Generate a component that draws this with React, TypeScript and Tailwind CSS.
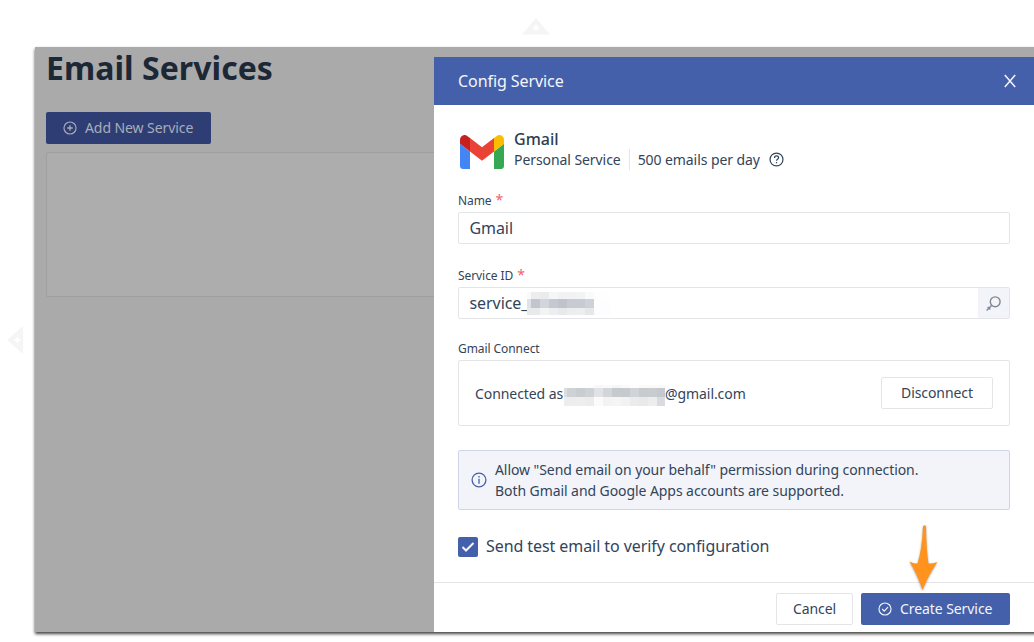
import React from 'react';

const serviceMosaic: string[][] = [
  ['#f9f9fa', '#eceded', '#eaebec', '#f5f6f7', '#f1f2f3', '#f2f2f5', '#f2f3f4', '#fafafa', '#fefefe'],
  ['#e1e2e6', '#c2c5ce', '#d2d6da', '#c4c8d0', '#bfc4cc', '#c8ccd2', '#c7ccd2', '#ced2d6', '#fdfdfd'],
  ['#e8e9ea', '#e8e9eb', '#f3f3f4', '#edeef0', '#e8e9ed', '#ecedef', '#edeeef', '#e6e7e9', '#fdfdfd'],
];

const emailMosaic: string[][] = [
  ['#ffffff', '#fefefe', '#fefefe', '#fefefe', '#f7f7f8', '#fafafa', '#f6f6f7', '#fafafa', '#fefefe', '#fafafa', '#fafafa', '#fafafa'],
  ['#dcdde1', '#cfd2d5', '#cacdd0', '#cfd2d5', '#e1e2e6', '#d3d6d9', '#c6cacd', '#c6cacd', '#d0d3d7', '#c7cbce', '#c8ccce', '#c5c9cd'],
  ['#ededee', '#ecedee', '#eeeeee', '#ececec', '#fbfbfb', '#f3f3f3', '#f5f5f5', '#f2f2f2', '#eaebeb', '#e8e9ea', '#ededee', '#dadbe0'],
];

function Mosaic({ rows, rowHeights, leadWidth, tailWidth }: { rows: string[][]; rowHeights: number[]; leadWidth: number; tailWidth: number }) {
  return (
    <div>
      {rows.map((row, r) => (
        <div key={r} className="flex" style={{ height: rowHeights[r] }}>
          {row.map((color, c) => (
            <div key={c} style={{ width: c === 0 ? leadWidth : c === row.length - 1 ? tailWidth : 9, background: color }} />
          ))}
        </div>
      ))}
    </div>
  );
}

function GmailLogo() {
  return (
    <svg className="h-[34px] w-[44px]" viewBox="52 42 88 66" preserveAspectRatio="none">
      <path fill="#4285f4" d="M58 108h14V74L52 59v43c0 3.32 2.69 6 6 6" />
      <path fill="#34a853" d="M120 108h14c3.32 0 6-2.69 6-6V59l-20 15" />
      <path fill="#fbbc04" d="M120 48v26l20-15v-8c0-7.42-8.47-11.65-14.4-7.2" />
      <path fill="#ea4335" d="M72 74V48l24 18 24-18v26L96 92" />
      <path fill="#c5221f" d="M52 51v8l20 15V48l-5.6-4.2c-5.94-4.45-14.4-.22-14.4 7.2" />
    </svg>
  );
}

function CircleIcon({ children, className }: { children: React.ReactNode; className: string }) {
  return (
    <svg className={className} viewBox="0 0 16 16" fill="none" stroke="currentColor" strokeWidth="1.3">
      <circle cx="8" cy="8" r="6.9" />
      {children}
    </svg>
  );
}

function Label({ text, required }: { text: string; required?: boolean }) {
  return (
    <div className="flex h-4 items-center text-[12px] leading-4">
      <span className="pt-[2px]">{text}</span>
      {required && <span className="-mt-px ml-[4px] h-5 text-[14px] leading-5 text-[#f0626d]">*</span>}
    </div>
  );
}

export default function App() {
  return (
    <div className="relative h-[642px] w-[1034px] overflow-hidden bg-white pt-[47px] pl-[35px] font-['Noto_Sans','Open_Sans',sans-serif] tracking-[-0.073px] text-[#33445a]">
      <svg className="absolute top-[18px] left-[521px] h-[17px] w-[30px]" viewBox="0 0 30 17">
        <path d="M15 0L29 16.5H1Z" fill="#f5f5f5" />
        <path d="M15 7v6M12 10h6" stroke="#fff" strokeWidth="2" />
      </svg>
      <svg className="absolute top-[325px] left-[7px] h-[30px] w-[16px]" viewBox="0 0 16 30">
        <path d="M0 15L16 1V29Z" fill="#f5f5f5" />
        <path d="M10.500 12v6M7.500 15h6" stroke="#fff" strokeWidth="2" />
      </svg>

      <div className="flex h-[585px] w-[1003px] bg-[#aaaaaa] shadow-[0_2px_3px_rgba(0,0,0,0.75)]">
        <main className="w-[399px] shrink-0 overflow-hidden pl-[11px]">
          <h1 className="h-[43px] text-[32px] leading-[41px] font-bold tracking-[0.05px] text-[#1c2836]">Email Services</h1>
          <button className="mt-[22px] flex h-8 w-[165px] items-center rounded-[2px] bg-[#2e3e74] pl-[17px] text-[14px] text-[#a9adba]">
            <CircleIcon className="mr-[8px] h-[14px] w-[14px]">
              <path d="M8 4.800v6.400M4.800 8h6.400" strokeWidth="1.500" />
            </CircleIcon>
            <span className="pb-[2px]">Add New Service</span>
          </button>
          <div className="mt-2 h-[145px] w-[420px] rounded-[2px] border border-[#9f9f9f] bg-[#adadad]" />
        </main>

        <section className="mt-[10px] flex h-[575px] w-[600px] shrink-0 flex-col bg-white">
          <header className="flex h-12 items-center justify-between bg-[#4460aa] pr-[18px] pl-6 text-[16px] text-[#f4f6fb]">
            <span>Config Service</span>
            <svg className="h-[14px] w-[12px]" viewBox="0 0 12 14" fill="none" stroke="currentColor" strokeWidth="1.500">
              <path d="M.8 1L11.200 13M11.200 1L.8 13" />
            </svg>
          </header>

          <div className="flex flex-1 flex-col px-6">
            <div className="mt-6 flex h-[43px] pl-[2px]">
              <div className="mt-[6px] mr-[10px]"><GmailLogo /></div>
              <div>
                <div className="h-5 text-[16px] leading-[20px] font-medium tracking-normal text-[#2d3e50]">Gmail</div>
                <div className="flex h-[21px] items-center text-[14px]">
                  Personal Service
                  <span className="mr-2 ml-[8px] h-[21px] w-px bg-[#e4e6e8]" />
                  500 emails per day
                  <CircleIcon className="ml-[9px] h-[15px] w-[15px]">
                    <path d="M5.900 6.400c0-3 4.300-2.800 4.300-.2 0 1.600-2.200 1.500-2.200 3.200M8 10.700v1.400" />
                  </CircleIcon>
                </div>
              </div>
            </div>

            <div className="mt-5"><Label text="Name" required /></div>
            <div className="mt-1 flex h-8 items-center rounded-[2px] border border-[#e3e5e8] px-[10.500px] text-[16px]">Gmail</div>

            <div className="mt-[23px]"><Label text="Service ID" required /></div>
            <div className="mt-1 flex h-8 items-center rounded-[2px] border border-[#e3e5e8] pl-[10.500px] text-[16px]">
              <span className="w-[57.500px]">service_</span>
              <Mosaic rows={serviceMosaic} rowHeights={[7, 9, 7]} leadWidth={4} tailWidth={16} />
              <div className="ml-auto flex h-[30px] w-[31px] items-center justify-center bg-[#f2f4f9] text-[#7e8894]">
                <svg className="h-[15px] w-[15px]" viewBox="0 0 15 15" fill="none" stroke="currentColor" strokeWidth="1.400">
                  <circle cx="9.200" cy="5.800" r="4.900" />
                  <path d="M5.800 9.200L.6 14.400M1.600 11l2.800 2.400" />
                </svg>
              </div>
            </div>

            <div className="mt-[21px]"><Label text="Gmail Connect" /></div>
            <div className="mt-1 flex h-[66px] items-center justify-between rounded-[2px] border border-[#e3e5e8] px-4 text-[14px]">
              <div className="flex items-center">
                <span className="w-[89px] whitespace-nowrap">Connected as</span>
                <div className="mt-[5px]">
                  <Mosaic rows={emailMosaic} rowHeights={[3, 9, 9]} leadWidth={3} tailWidth={8} />
                </div>
                @gmail.com
              </div>
              <button className="h-8 w-[112px] rounded-[2px] border border-[#e3e5e8] pb-px text-[14px]">Disconnect</button>
            </div>

            <div className="mt-6 flex h-[60px] items-center rounded-[2px] border border-[#ced5e8] bg-[#f2f4f9] pl-3 text-[14px] leading-[21px]">
              <CircleIcon className="mr-2 h-4 w-4 text-[#4460aa]">
                <path d="M8 4v1.500M8 6.800v5" />
              </CircleIcon>
              <div>
                <p>Allow "Send email on your behalf" permission during connection.</p>
                <p>Both Gmail and Google Apps accounts are supported.</p>
              </div>
            </div>

            <label className="mt-[27px] flex h-5 items-center text-[16px]">
              <span className="mr-2 flex h-5 w-5 items-center justify-center rounded-[2px] bg-[#4460aa]">
                <svg className="h-[12px] w-[14px]" viewBox="0 0 14 12" fill="none" stroke="#f4f6fb" strokeWidth="2">
                  <path d="M1.500 6L5 9.500L12.500 2" />
                </svg>
              </span>
              <span className="pb-[2px]">Send test email to verify configuration</span>
            </label>
          </div>

          <footer className="flex h-[50px] items-start justify-end gap-2 border-t border-[#e3e5e8] pt-[10px] pr-6 text-[14px]">
            <button className="h-8 w-[77px] rounded-[2px] border border-[#e3e5e8] pb-[2px]">Cancel</button>
            <button className="flex h-8 w-[149px] items-center rounded-[2px] bg-[#4460aa] pl-[17px] text-[#f4f6fb]">
              <CircleIcon className="mr-[8px] h-[14px] w-[14px]">
                <path d="M4.800 8l2.300 2.400 4.300-4.600" />
              </CircleIcon>
              <span className="pb-[2px]">Create Service</span>
            </button>
          </footer>
        </section>
      </div>

      <svg className="absolute top-[520px] left-[904px] h-[76px] w-[38px] drop-shadow-[0_1px_1px_rgba(0,0,0,0.35)]" viewBox="0 0 38 76">
        <path d="M19 6.500Q20.500 3.800 22 6.500Q22.300 30 24.500 43.500Q28 44 33.300 42Q24.500 55 18.500 70Q13.500 55 5.500 41.500Q10 44 13.500 43.500Q18 30 19 6.500Z" fill="#ff931e" />
      </svg>
    </div>
  );
}
